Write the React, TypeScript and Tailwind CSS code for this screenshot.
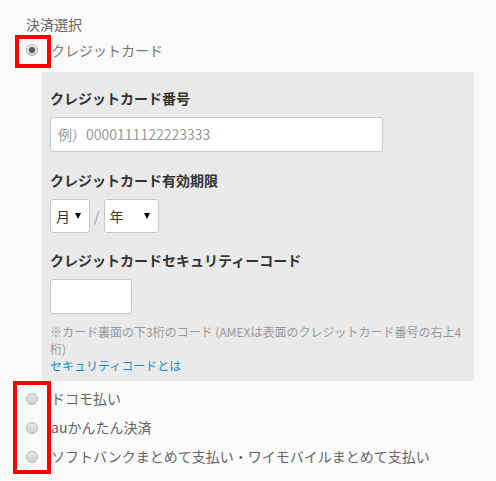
const font = { fontFamily: '"Noto Sans CJK JP", "Noto Sans", sans-serif' }

function Radio({ checked = false }: { checked?: boolean }) {
  return (
    <span className="flex h-[12px] w-[12px] shrink-0 items-center justify-center rounded-full border border-[#b5b5b5] bg-gradient-to-b from-[#e8e8e8] to-[#cfcfcf]">
      {checked && <span className="h-[6px] w-[6px] rounded-full bg-[#555]" />}
    </span>
  )
}

function SelectBox({ label, width }: { label: string; width: string }) {
  return (
    <div className={`flex h-[34px] ${width} items-center justify-between rounded-[3px] border border-[#c8c8c8] bg-white pl-[5px] pr-[8px] text-[14px] text-[#333]`}>
      <span>{label}</span>
      <span className="h-0 w-0 border-x-[3.5px] border-t-[6px] border-x-transparent border-t-black" />
    </div>
  )
}

const others = ["ドコモ払い", "auかんたん決済", "ソフトバンクまとめて支払い・ワイモバイルまとめて支払い"]

export default function App() {
  return (
    <div style={font} className="relative h-[481px] w-[496px] overflow-hidden bg-[#fafafa] pl-[26px] pt-[14px]">
      <div className="text-[14px] leading-[20px] text-[#666]">決済選択</div>

      <div className="flex h-[32px] items-center gap-[13px] text-[14px] text-[#777]">
        <Radio checked />
        <span>クレジットカード</span>
      </div>

      <div className="ml-[16px] mt-[6px] w-[432px] bg-[#eaeaea] px-[8px] pb-[7px] pt-[16px]">
        <div className="text-[14px] font-bold leading-[20px] text-[#333]">クレジットカード番号</div>
        <div className="mt-[9px] flex h-[35px] w-[333px] items-center rounded-[3px] border border-[#c8c8c8] bg-white pl-[7px] text-[14px] text-[#999]">
          例）0000111122223333
        </div>

        <div className="mt-[18px] text-[14px] font-bold leading-[20px] text-[#333]">クレジットカード有効期限</div>
        <div className="mt-[9px] flex items-center">
          <SelectBox label="月" width="w-[40px]" />
          <span className="mx-[4px] text-[14px] text-[#999]">/</span>
          <SelectBox label="年" width="w-[55px]" />
        </div>

        <div className="mt-[17px] text-[14px] font-bold leading-[20px] text-[#333]">クレジットカードセキュリティーコード</div>
        <div className="mt-[9px] h-[35px] w-[82px] rounded-[3px] border border-[#c8c8c8] bg-white" />

        <p className="mt-[9px] text-[12px] leading-[17px] text-[#999]">
          ※カード裏面の下3桁のコード (AMEXは表面のクレジットカード番号の右上4桁)
        </p>
        <a href="#" className="block text-[12px] leading-[17px] text-[#1a8ad6]">セキュリティコードとは</a>
      </div>

      <div className="mt-[3px]">
        {others.map((label) => (
          <div key={label} className="flex h-[29px] items-center gap-[13px] text-[14px] text-[#666]">
            <Radio />
            <span>{label}</span>
          </div>
        ))}
      </div>

      <div className="pointer-events-none absolute left-[15px] top-[35px] h-[33px] w-[36px] border-[4px] border-[#f00]" />
      <div className="pointer-events-none absolute left-[13px] top-[381px] h-[93px] w-[38px] border-[4px] border-[#f00]" />
    </div>
  )
}
